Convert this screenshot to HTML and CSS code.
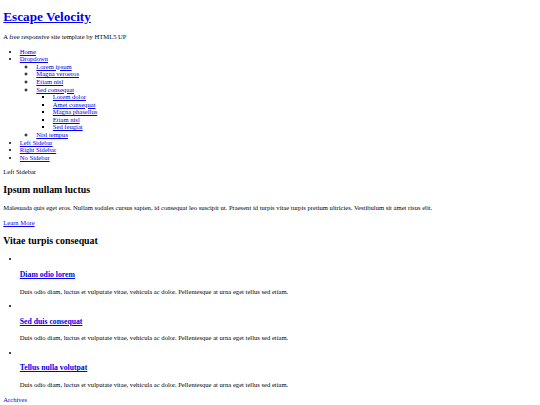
FILE: index.html
```
<!DOCTYPE html>
<html>
<head>
    <title>Left Sidebar - Escape Velocity by HTML5 UP</title>

    <link rel="stylesheet" href="styles.css">
</head>
<body class="left-sidebar">
    <div id="page-wrapper">
        <div id="header">
            <div id="logo">
                <h1 class="logo-title"><a href="index.html">Escape Velocity</a></h1>
                <p class="tagline">A free responsive site template by HTML5 UP</p>
            </div>
            <nav id="nav">
                <ul class="menu">
                    <li><a href="index.html">Home</a></li>
                    <li>
                        <a href="#">Dropdown</a>
                        <ul class="submenu">
                            <li><a href="#">Lorem ipsum</a></li>
                            <li><a href="#">Magna veroeros</a></li>
                            <li><a href="#">Etiam nisl</a></li>
                            <li>
                                <a href="#">Sed consequat</a>
                                <ul class="submenu">
                                    <li><a href="#">Lorem dolor</a></li>
                                    <li><a href="#">Amet consequat</a></li>
                                    <li><a href="#">Magna phasellus</a></li>
                                    <li><a href="#">Etiam nisl</a></li>
                                    <li><a href="#">Sed feugiat</a></li>
                                </ul>
                            </li>
                            <li><a href="#">Nisl tempus</a></li>
                        </ul>
                    </li>
                    <li><a href="left-sidebar.html">Left Sidebar</a></li>
                    <li><a href="right-sidebar.html">Right Sidebar</a></li>
                    <li><a href="no-sidebar.html">No Sidebar</a></li>
                </ul>
            </nav>
        </div>

        <div id="main">
            <div class="title">Left Sidebar</div>
            <div id="sidebar">
                <section class="box">
                    <h2 class="box-title">Ipsum nullam luctus</h2>
                    <p class="box-text">Malesuada quis eget eros. Nullam sodales cursus sapien, id consequat leo suscipit ut. Praesent id turpis vitae turpis pretium ultricies. Vestibulum sit amet risus elit.</p>
                    <div class="box-footer"><a href="#" class="button">Learn More</a></div>
                </section>
                <section class="box">
                    <h2 class="box-title">Vitae turpis consequat</h2>
                    <ul class="posts">
                        <li>
                            <span class="thumb"></span>
                            <h3 class="post-title"><a href="#">Diam odio lorem</a></h3>
                            <p class="post-text">Duis odio diam, luctus et vulputate vitae, vehicula ac dolor. Pellentesque at urna eget tellus sed etiam.</p>
                        </li>
                        <li>
                            <span class="thumb"></span>
                            <h3 class="post-title"><a href="#">Sed duis consequat</a></h3>
                            <p class="post-text">Duis odio diam, luctus et vulputate vitae, vehicula ac dolor. Pellentesque at urna eget tellus sed etiam.</p>
                        </li>
                        <li>
                            <span class="thumb"></span>
                            <h3 class="post-title"><a href="#">Tellus nulla volutpat</a></h3>
                            <p class="post-text">Duis odio diam, luctus et vulputate vitae, vehicula ac dolor. Pellentesque at urna eget tellus sed etiam.</p>
                        </li>
                    </ul>
                    <div class="box-footer"><a href="#" class="button">Archives</a></div>
                </section>
            </div>
        </div>
    </div>
</body>
</html>
```

FILE: styles.css
```
    html {
        font-size: 6.6px;
    }
    body {
        margin: 0.5em;
        font-family: "Liberation Serif", "Times New Roman", serif;
        font-size: 1rem;
        line-height: 1.15;
        color: #000;
        background-color: #fff;
    }
    a {
        color: #0000ee;
    }
    .logo-title {
        font-size: 2em;
        margin: 0.45em 0 0.67em;
    }
    .tagline, .box-text, .post-text {
        margin: 1.04em 0;
    }
    .menu, .posts {
        margin: 1.04em 0;
        padding-left: 2.5em;
        list-style-type: disc;
    }
    .submenu {
        margin: 0;
        padding-left: 2.5em;
        list-style-type: circle;
    }
    .submenu .submenu {
        list-style-type: square;
    }
    .box-title {
        font-size: 1.5em;
        margin: 0.87em 0;
    }
    .post-title {
        font-size: 1.17em;
        margin: 1.04em 0;
    }
    .thumb {
        display: inline-block;
        width: 0;
        height: 0;
    }
```
